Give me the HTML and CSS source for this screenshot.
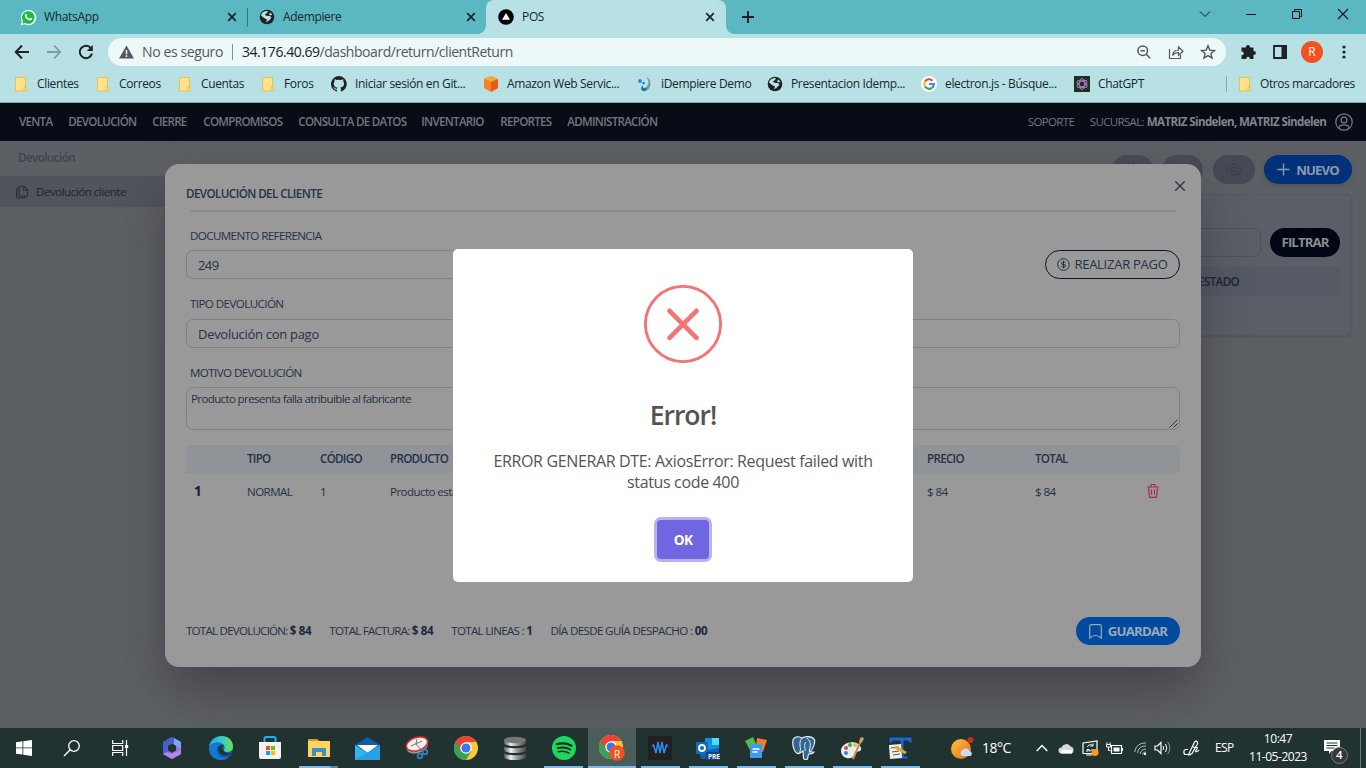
FILE: index.html
```html
<!DOCTYPE html>
<html lang="es">
<head>
<meta charset="utf-8">
<title>POS</title>
<link rel="stylesheet" href="styles.css">
</head>
<body>
<svg class="defs" width="0" height="0">
  <defs>
    <linearGradient id="g365" x1="0" y1="0" x2="1" y2="1"><stop offset="0" stop-color="#2f66c8"/><stop offset=".5" stop-color="#7e6bdc"/><stop offset="1" stop-color="#c77be8"/></linearGradient>
    <linearGradient id="gEdge" x1="0" y1="0" x2="1" y2="0"><stop offset="0" stop-color="#27a9e8"/><stop offset=".6" stop-color="#3dcdb8"/><stop offset="1" stop-color="#6fe04c"/></linearGradient>
    <linearGradient id="gDb" x1="0" y1="0" x2="1" y2="0"><stop offset="0" stop-color="#555"/><stop offset=".3" stop-color="#eee"/><stop offset=".6" stop-color="#999"/><stop offset="1" stop-color="#444"/></linearGradient>
    <linearGradient id="gSun" x1="0" y1="0" x2="1" y2="1"><stop offset="0" stop-color="#f9c43c"/><stop offset="1" stop-color="#f0661f"/></linearGradient>
    <symbol id="close" viewBox="0 0 10 10"><path d="M1.2 1.2l7.6 7.6M8.8 1.2L1.2 8.8" stroke="#202124" stroke-width="1.7"/></symbol>
    <symbol id="globe" viewBox="0 0 16 16"><circle cx="8" cy="8" r="7.3" fill="#202124"/><path d="M2 6.500Q2.500 3.500 6 2.200L9 2 8 4 6 5.200l1 1.500 4 .3 1.500 1.500-2 2.500L7 13.500l1-3L5 9zM11 3.600l2.300 1.900-1.300 1-2-1z" fill="#b7e1e4"/></symbol>
    <symbol id="folder" viewBox="0 0 14 16"><path d="M2.500 1.500h10v9.500l.8 1v3h-10.800z" fill="#ffe28a" stroke="#e8c04c"/><path d="M11 14.500v-3.500h1.500" fill="none" stroke="#e8c04c"/></symbol>
    <symbol id="chrome" viewBox="0 0 24 24"><circle cx="12" cy="12" r="12" fill="#fcc934"/><path d="M1.600 6A12 12 0 0 0 12 24L17.200 15 12 12z" fill="#34a353"/><path d="M1.600 6A12 12 0 0 1 22.400 6H12L7 15z" fill="#e94335"/><circle cx="12" cy="12" r="5.800" fill="#fff"/><circle cx="12" cy="12" r="4.500" fill="#3b78e7"/></symbol>
  </defs>
</svg>
<div class="screen">
  <header class="tabs">
    <div class="tab tab-a"><svg width="17" height="17" viewBox="0 0 17 17"><path d="M.8 16.300l1-4A7.700 7.700 0 1 1 4.800 15.300z" fill="#fff"/><path d="M2.400 14.700l.7-2.600A6.300 6.300 0 1 1 5.200 14z" fill="#12c143"/><path d="M5 5.500c.6-1.300 1.600-1 2 .2.300.9-.6 1-.2 1.700.6 1.100 1.500 1.700 2.500 2.100.7.200.8-1 1.500-.7 2.200.9 1.600 1.500.9 2.100C9.500 12.800 3.600 8.800 5 5.500z" fill="#fff"/></svg><span>WhatsApp</span><svg width="10" height="10"><use href="#close"/></svg></div>
    <div class="tab tab-b"><svg width="16" height="16"><use href="#globe"/></svg><span>Adempiere</span><svg width="10" height="10"><use href="#close"/></svg></div>
    <div class="tab tab-c"><svg width="16" height="16" viewBox="0 0 16 16"><circle cx="8" cy="8" r="7.800" fill="#000"/><path d="M8 4l4 6.800H4z" fill="#fff"/></svg><span>POS</span><svg width="10" height="10"><use href="#close"/></svg></div>
    <svg class="plus" width="12" height="12" viewBox="0 0 12 12"><path d="M6 0v12M0 6h12" stroke="#202124" stroke-width="1.900"/></svg>
    <div class="win">
      <svg width="12" height="12" viewBox="0 0 12 12"><path d="M1 3.500l5 5 5-5" fill="none" stroke="#111"/></svg>
      <svg width="12" height="12" viewBox="0 0 12 12"><path d="M1 6.500h10" stroke="#111"/></svg>
      <svg width="12" height="12" viewBox="0 0 12 12"><path d="M1.500 3.500h7v7h-7zM3.500 3v-1.500h7v7H9" fill="none" stroke="#111"/></svg>
      <svg width="12" height="12" viewBox="0 0 12 12"><path d="M1 1l10 10M11 1L1 11" stroke="#111" stroke-width="1.100"/></svg>
    </div>
  </header>
  <div class="toolbar">
    <svg width="16" height="16" viewBox="0 0 16 16"><path d="M15 8H2M8 1.500L1.800 8 8 14.500" fill="none" stroke="#202124" stroke-width="2"/></svg>
    <svg width="16" height="16" viewBox="0 0 16 16"><path d="M1 8h13M8 1.500L14.200 8 8 14.500" fill="none" stroke="#7e9a9d" stroke-width="1.800"/></svg>
    <svg width="16" height="16" viewBox="0 0 16 16"><path d="M13 4.300A6.200 6.200 0 1 0 14 9.600" fill="none" stroke="#202124" stroke-width="2"/><path d="M14.800 1v6H8.800z" fill="#202124"/></svg>
    <div class="omnibox">
      <svg width="15" height="14" viewBox="0 0 15 14"><path d="M7.500.5L15 13.500H0z" fill="#54585b"/><path d="M7.500 5v4.200M7.500 10.300v1.700" stroke="#edf8f8" stroke-width="1.500"/></svg>
      <span class="insecure">No es seguro</span><i></i><span class="url"><b>34.176.40.69</b>/dashboard/return/clientReturn</span>
      <div class="oicons">
        <svg width="16" height="16" viewBox="0 0 16 16"><circle cx="6.700" cy="6.700" r="4.800" fill="none" stroke="#54585b" stroke-width="1.500"/><path d="M4.500 6.700h4.400M10 10l4.200 4.200" stroke="#54585b" stroke-width="1.500"/></svg>
        <svg width="16" height="16" viewBox="0 0 16 16"><path d="M1.500 5v9.500h11V11M4.500 11.500c.5-4 3-5.500 6-5.500V3l4.500 4.300-4.500 4V8.500c-2.500 0-4.500.7-6 3z" fill="none" stroke="#54585b" stroke-width="1.200"/></svg>
        <svg width="16" height="16" viewBox="0 0 16 16"><path d="M8 1.800l1.800 4.300 4.700.4-3.600 3 1.100 4.600-4-2.500-4 2.500 1.100-4.600-3.600-3 4.700-.4z" fill="none" stroke="#54585b" stroke-width="1.400"/></svg>
      </div>
    </div>
    <div class="ext">
      <svg width="16" height="16" viewBox="0 0 16 16"><path d="M6 3a2 2 0 0 1 4 0v.5h3.500V7h.5a1.900 1.900 0 0 1 0 3.800h-.5V15H9.800v-.6a1.700 1.700 0 0 0-3.400 0v.6H1.500v-3.800H2a1.800 1.800 0 0 0 0-3.600h-.5V3.500H6z" fill="#202124"/></svg>
      <svg width="16" height="16" viewBox="0 0 16 16"><path d="M2 2h12v12H2z" fill="none" stroke="#202124" stroke-width="1.800"/><path d="M9.500 1.500H15v13H9.500z" fill="#202124"/></svg>
      <span class="avatar">R</span>
      <svg width="4" height="14" viewBox="0 0 4 14"><g fill="#202124"><circle cx="2" cy="2" r="1.600"/><circle cx="2" cy="7" r="1.600"/><circle cx="2" cy="12" r="1.600"/></g></svg>
    </div>
  </div>
  <nav class="bookmarks">
    <span><svg width="14" height="16"><use href="#folder"/></svg>Clientes</span>
    <span><svg width="14" height="16"><use href="#folder"/></svg>Correos</span>
    <span><svg width="14" height="16"><use href="#folder"/></svg>Cuentas</span>
    <span><svg width="14" height="16"><use href="#folder"/></svg>Foros</span>
    <span><svg width="16" height="16" viewBox="0 0 16 16"><path d="M8 0a8 8 0 0 0-2.500 15.600c.4 0 .5-.2.500-.4v-1.500c-2.200.5-2.700-1-2.700-1-.4-.9-.9-1.200-.9-1.200-.7-.5.1-.5.1-.5.800.100 1.200.8 1.200.8.700 1.300 1.900.9 2.300.7.100-.5.300-.9.500-1.100-1.800-.2-3.700-.9-3.700-4 0-.8.3-1.500.8-2.100 0-.2-.3-1 .1-2.100 0 0 .7-.2 2.200.8a7.600 7.600 0 0 1 4 0c1.500-1 2.200-.8 2.200-.8.400 1.100.2 1.900.1 2.100.5.600.8 1.300.8 2.100 0 3.100-1.900 3.700-3.700 4 .3.300.6.800.6 1.500v2.200c0 .2.100.5.600.4A8 8 0 0 0 8 0z" fill="#202124"/></svg>Iniciar sesión en Git...</span>
    <span><svg width="16" height="16" viewBox="0 0 16 16"><path d="M8 0l7 3v9l-7 4-7-4V3z" fill="#f58220"/><path d="M8 6l7-3v9l-7 4z" fill="#ea5a1c"/><path d="M8 0l7 3-7 3-7-3z" fill="#fba53c"/></svg>Amazon Web Servic...</span>
    <span><svg width="16" height="16" viewBox="0 0 16 16"><path d="M9 1c6 2 6 11 0 14-4 1.500-6-3-3.500-5.500 0 2.500 2 3.500 4 1.500C12 8 12 4 9 1z" fill="#7d98a5"/><path d="M5.500 9.500c0 3 2.500 3.500 4.500 1.500 0 2.500-2 4.500-4 4S3.500 11.500 5.500 9.500z" fill="#1276b5"/><circle cx="3" cy="5" r="1.900" fill="#1b8ed0"/><circle cx="6.500" cy="7" r="1.200" fill="#1276b5"/></svg>iDempiere Demo</span>
    <span><svg width="16" height="16"><use href="#globe"/></svg>Presentacion Idemp...</span>
    <span><svg width="16" height="16" viewBox="0 0 16 16"><circle cx="8" cy="8" r="8" fill="#fff"/><g fill="none" stroke-width="2.200"><path d="M4 5.500A4.800 4.800 0 0 1 11.500 4.700" stroke="#ea4335"/><path d="M4 10.500a4.900 4.900 0 0 1 0-5" stroke="#fbbc05"/><path d="M11 11.800A4.800 4.800 0 0 1 4 10.500" stroke="#34a853"/><path d="M8 8h4.800a4.800 4.800 0 0 1-1.800 3.800" stroke="#4285f4"/></g></svg>electron.js - Búsque...</span>
    <span><svg width="16" height="16" viewBox="0 0 16 16"><path d="M0 0h16v16H0z" fill="#1c3220"/><g fill="none" stroke="#c07fd2" stroke-width=".9"><ellipse cx="8" cy="8" rx="2.800" ry="5.500"/><ellipse cx="8" cy="8" rx="2.800" ry="5.500" transform="rotate(60 8 8)"/><ellipse cx="8" cy="8" rx="2.800" ry="5.500" transform="rotate(120 8 8)"/></g></svg>ChatGPT</span>
    <span class="others"><svg width="14" height="16"><use href="#folder"/></svg>Otros marcadores</span>
  </nav>

  <main class="app">
    <nav class="menu">
      <span>VENTA</span><span>DEVOLUCIÓN</span><span>CIERRE</span><span>COMPROMISOS</span><span>CONSULTA DE DATOS</span><span>INVENTARIO</span><span>REPORTES</span><span>ADMINISTRACIÓN</span>
      <span class="support">SOPORTE</span><span class="branch">SUCURSAL:</span><strong>MATRIZ Sindelen, MATRIZ Sindelen</strong>
      <svg width="18" height="18" viewBox="0 0 18 18"><g fill="none" stroke="#777b89" stroke-width="1.200"><circle cx="9" cy="9" r="8.200"/><circle cx="9" cy="7" r="2.900"/><path d="M4 15c0-4.300 10-4.300 10 0"/></g></svg>
    </nav>
    <div class="body">
      <aside class="side">
        <h4>Devolución</h4>
        <div class="item"><svg width="14" height="14" viewBox="0 0 14 14"><path d="M4 1.200h4.800l3.700 3.600v5.400a1 1 0 0 1-1 1H5a1 1 0 0 1-1-1zM8.500 1.200V5h4M4 3.500H2.600a1 1 0 0 0-1 1v7.300a1.200 1.200 0 0 0 1.200 1.200h6.500a1 1 0 0 0 1-1v-.8" fill="none" stroke="#272d3a" stroke-width="1.100"/></svg>Devolución cliente</div>
      </aside>
      <section class="content">
        <div class="actions">
          <span class="pill"><svg width="16" height="18" viewBox="0 0 16 18"><path d="M8 1v14M4 11l4 4 4-4" fill="none" stroke="#2c3243" stroke-width="1.200"/></svg></span>
          <span class="pill"><svg width="16" height="16" viewBox="0 0 16 16"><path d="M13 5a6 6 0 1 0 1 5M13.700 1.500V5H10" fill="none" stroke="#2c3243" stroke-width="1.200"/></svg></span>
          <span class="pill wide"><svg width="16" height="13" viewBox="0 0 16 13"><path d="M.8 6.500C3.500-.8 12.500-.8 15.200 6.500c-2.700 7.300-11.700 7.300-14.400 0z" fill="none" stroke="#393d4b"/><circle cx="8" cy="6.500" r="2.500" fill="none" stroke="#393d4b"/></svg></span>
          <span class="nuevo"><svg width="13" height="13" viewBox="0 0 13 13"><path d="M6.500.5v12M.5 6.500h12" stroke="#8c99aa" stroke-width="1.400"/></svg>NUEVO</span>
        </div>
        <div class="panel">
          <div class="filter"><span class="field"></span><span class="filtrar">FILTRAR</span></div>
          <div class="thead">ESTADO</div>
        </div>
      </section>
    </div>
  </main>

  <footer class="taskbar">
    <div class="slots sys">
      <span><svg width="16" height="16" viewBox="0 0 16 16"><path d="M0 2.200l6.500-.9v6.200H0zM7.300 1.200L16 0v7.500H7.300zM0 8.300h6.500v6.300L0 13.700zM7.300 8.300H16V16l-8.700-1.200z" fill="#fff"/></svg></span>
      <span><svg width="18" height="18" viewBox="0 0 18 18"><circle cx="11" cy="7" r="5.300" fill="none" stroke="#fff" stroke-width="1.300"/><path d="M7.200 10.800L1 17" stroke="#fff" stroke-width="1.400"/></svg></span>
      <span><svg width="17" height="16" viewBox="0 0 17 16"><path d="M.7 0v3.500h10V0M.7 16v-3.500h10V16M.7 5.500h10v5H.7zM14.500 0v16" fill="none" stroke="#fff" stroke-width="1.200"/><path d="M13 5h3.200v3H13z" fill="#fff"/></svg></span>
    </div>
    <div class="slots apps">
      <span><svg width="22" height="24" viewBox="0 0 22 24"><path d="M11 1l9 5v12l-9 5-9-5V6z" fill="url(#g365)"/><path d="M11 1L2 6v12l4 2 1-10 6-3.500V2z" fill="#4a5fcb"/><path d="M20 6v7l-7-4V2z" fill="#79a9e8"/><path d="M2 18l9 5 9-5v-4l-9 4-5-2z" fill="#b483e6"/><path d="M11 7.500l4 2.300v4.600l-4 2.300-4-2.300V9.800z" fill="#203331"/></svg></span>
      <span><svg width="24" height="24" viewBox="0 0 24 24"><circle cx="12" cy="12" r="12" fill="#0f59a4"/><path d="M0 11C2-3 24-4 24 11c0 5-7 6.500-9.500 3.500C17 12 15 7 10 7 5 7 1 9 0 11z" fill="url(#gEdge)"/><path d="M0 12C2 6 11 4 14 9c-6-1-8 6-4 10 3 3.500 8 3 11 1C15 27 0 25 0 12z" fill="#1179d4"/><path d="M14.500 14.500c-3-2-1-5 0-6-5-1-7 6-2.500 9.500 3 2 7 1.500 9.700-.2 1-.7.500-1.300 0-1-2 1-5 1-7.200-2.300z" fill="#203331"/></svg></span>
      <span><svg width="24" height="24" viewBox="0 0 24 24"><path d="M6.500 7V2.500Q6.500 1 8 1h8q1.500 0 1.500 1.500V7" fill="none" stroke="#22aef0" stroke-width="2"/><path d="M1 6h22v15q0 2-2 2H3q-2 0-2-2z" fill="#f2f2f2"/><path d="M8 10h4v4H8z" fill="#f1511b"/><path d="M13 10h4v4h-4z" fill="#80bb03"/><path d="M8 15h4v4H8z" fill="#05a6f0"/><path d="M13 15h4v4h-4z" fill="#fbb908"/></svg></span>
      <span class="run more"><svg width="22" height="20" viewBox="0 0 22 20"><path d="M0 1h9l2 2h11v16H0z" fill="#ffd560"/><path d="M0 1h9l2 2H0z" fill="#d9981c"/><path d="M4 10h14v8h-4v-4H8v4H4z" fill="#3a8fd0"/></svg></span>
      <span><svg width="25" height="23" viewBox="0 0 25 23"><path d="M0 8l12.500-8L25 8v3H0z" fill="#0b5ea8"/><path d="M2 8h21l-10.500 8z" fill="#fff"/><path d="M0 8l12.500 8L25 8v15H0z" fill="#31b4f0"/><path d="M0 23L25 8v15z" fill="#27a0e4"/></svg></span>
      <span><svg width="24" height="24" viewBox="0 0 24 24"><ellipse cx="12" cy="10.500" rx="11" ry="6.500" transform="rotate(-18 12 10)" fill="#999"/><ellipse cx="12" cy="8" rx="11" ry="6.500" transform="rotate(-18 12 8)" fill="#f4eeee" stroke="#d32f2f" stroke-width="1.500"/><path d="M6 10l11-5M12 3l-1 5 7 8" stroke="#777" fill="none"/><circle cx="15" cy="20" r="2.300" fill="none" stroke="#2e85bd" stroke-width="1.800"/><circle cx="20" cy="16" r="2.300" fill="none" stroke="#2e85bd" stroke-width="1.800"/></svg></span>
      <span><svg width="24" height="24"><use href="#chrome"/></svg></span>
      <span><svg width="22" height="24" viewBox="0 0 22 24"><g fill="url(#gDb)"><path d="M0 4v3c0 4 22 4 22 0V4zM0 10v4c0 4 22 4 22 0v-4c0 3-22 3-22 0zM0 17v4c0 4 22 4 22 0v-4c0 3-22 3-22 0z"/></g><ellipse cx="11" cy="4" rx="11" ry="3.300" fill="#777"/></svg></span>
      <span class="run"><svg width="24" height="24" viewBox="0 0 24 24"><circle cx="12" cy="12" r="12" fill="#1ed760"/><g fill="none" stroke="#102c1c" stroke-linecap="round"><path d="M5 8.200q8-2.200 14.500 1.500" stroke-width="2.300"/><path d="M5.700 12.200q7-1.800 12.500 1.300" stroke-width="1.900"/><path d="M6.300 15.800q6-1.400 10.500 1.200" stroke-width="1.600"/></g></svg></span>
      <span class="run active"><svg width="26" height="26" viewBox="0 0 26 26"><svg width="24" height="24"><use href="#chrome"/></svg><circle cx="18" cy="18" r="7.800" fill="#f4511e"/></svg><em>R</em></span>
      <span class="run"><svg width="24" height="24" viewBox="0 0 24 24"><path d="M0 0h24v24H0z" fill="#222020"/><path d="M4 10l1.500-1L8 17l2-11 2 11 2-11 2 11 2.500-8 1.500 1" fill="none" stroke="#2d8ef0" stroke-width="1.500"/></svg></span>
      <span class="run"><svg width="24" height="24" viewBox="0 0 24 24"><path d="M9 2h14v14H9z" fill="#1490df"/><path d="M16 2h7v7h-7z" fill="#50d9ff"/><path d="M3 16l20-4v11H5z" fill="#125fb2"/><path d="M0 6h12v12H0z" fill="#0f6cbd"/><circle cx="6" cy="12" r="3" fill="none" stroke="#fff" stroke-width="1.800"/><path d="M10 16h14v8H10z" fill="#11457e"/></svg><em class="pre">PRE</em></span>
      <span class="run"><svg width="22" height="22" viewBox="0 0 22 22"><path d="M0 4l8-4 4 9-6 6z" fill="#57b946"/><path d="M12 1l10 2-4 12-7-4z" fill="#f57c22"/><path d="M5 7h12v14H5z" fill="#3b9bf5"/><path d="M7.500 12h7M7.500 15h5" stroke="#fff" stroke-width="1.500"/></svg></span>
      <span class="run"><svg width="24" height="24" viewBox="0 0 24 24"><path d="M8 17C3 20 0 10 1 4c2-5 7-3 9-2 6-3 14-1 12.500 5-1 5-3 8-5.500 9l5 0c-1 2-4 2-5.500 2l-1 5q-3 2-4-1l-.5-7z" fill="#336791" stroke="#e7edf2" stroke-width="1.200"/><path d="M10 2C7 5 8 10 8.500 13c-.5 2 0 3-2 4M15 2c4 4 4 7 2 13M14 6c-3 3 0 6-1 9" fill="none" stroke="#e7edf2"/></svg></span>
      <span class="run"><svg width="24" height="24" viewBox="0 0 24 24"><path d="M1 15C1 5 19 3 21 12c1 5-5 2-6 6-2 7-14 5-14-3z" fill="#e8edf2"/><circle cx="6" cy="12" r="2" fill="#e04a3a"/><circle cx="10" cy="9" r="2" fill="#4aa84a"/><circle cx="15" cy="9" r="2" fill="#efba30"/><circle cx="6" cy="17" r="2" fill="#3b82d0"/><path d="M22 2L13 23" stroke="#c98b4a" stroke-width="2"/><path d="M19 5l2-4 3 1-2 5z" fill="#c9a06a"/></svg></span>
      <span class="run"><svg width="24" height="24" viewBox="0 0 24 24"><path d="M1 1h23v6h-3l-1-2h-4v15h4v3H9v-3h3V5H5L4 7H1z" fill="#2467bd" stroke="#0d3157"/><path d="M1 9l12-1 1 14-12 1z" fill="#f1f1ec"/><path d="M3 12l8-1M4 16l7-1M5 19l7-1" stroke="#555"/><path d="M7 11l11 6" stroke="#e5a825" stroke-width="3"/></svg></span>
    </div>
    <div class="tray">
      <svg class="sun" width="23" height="23" viewBox="0 0 23 23"><circle cx="10" cy="12" r="10" fill="url(#gSun)"/><path d="M11 19a3.500 3.500 0 0 1 .5-6 4 4 0 0 1 7 1 2.700 2.700 0 0 1 1 5z" fill="#c5dcf8"/><circle cx="19.500" cy="3" r="3" fill="#cf2b1f"/></svg>
      <span class="deg">18°C</span>
      <svg class="t1" width="12" height="8" viewBox="0 0 12 8"><path d="M.7 7L6 1.500 11.300 7" fill="none" stroke="#fff" stroke-width="1.400"/></svg>
      <svg class="t2" width="17" height="11" viewBox="0 0 17 11"><path d="M3.500 10.500a3 3 0 0 1 0-6 5 5 0 0 1 9-1 3.600 3.600 0 0 1 .5 7z" fill="#d8d8d8"/><path d="M3 10.500c0-4 4-5 6-3 3-2 7 0 5 3z" fill="#fff"/></svg>
      <svg class="t3" width="17" height="16" viewBox="0 0 17 16"><path d="M1 3l14-2v12.500H1zM4 15h6" fill="none" stroke="#fff" stroke-width="1.200"/><path d="M5.500 7a3 3 0 0 1 5-1.500M11 3.500V6H8.500M10.500 9a3 3 0 0 1-5 1M5 12V9.500h2.500" fill="none" stroke="#fff"/><circle cx="13" cy="12.500" r="3.500" fill="#ff9a16"/></svg>
      <svg class="t4" width="17" height="13" viewBox="0 0 17 13"><path d="M5.500 3.500h10v8h-10z" fill="none" stroke="#fff" stroke-width="1.200"/><path d="M7.500 5.500h6v4h-6zM16 6h1v3h-1z" fill="#fff"/><path d="M1 .5v2M4 .5v2M.5 2.500h4v2.500h-4zM2.500 5v3.500h2" fill="none" stroke="#fff"/></svg>
      <svg class="t5" width="13" height="13" viewBox="0 0 13 13"><g fill="none" stroke="#b5bcbb"><path d="M.7 10A10 10 0 0 1 12 1M3.500 11A7.500 7.500 0 0 1 12 4M6.300 12A5 5 0 0 1 12 7.200M8.700 12.500A3 3 0 0 1 12 10"/></g><circle cx="11" cy="12" r="1.200" fill="#fff"/></svg>
      <svg class="t6" width="17" height="14" viewBox="0 0 17 14"><path d="M1 5h2.500L7 1.500v11L3.500 9H1z" fill="none" stroke="#fff" stroke-width="1.200"/><path d="M9 5q1.500 2 0 4M11.500 3q2.500 4 0 8" fill="none" stroke="#fff"/><path d="M13.800 1q4 6 0 12" fill="none" stroke="#8a9694"/></svg>
      <svg class="t7" width="17" height="16" viewBox="0 0 17 16"><path d="M5 9.500H2.500C.2 10 .2 14.500 3 14.500h2.500M6 13.500L11.500 2.200q1.500-2 3 0 .5 1-.2 2L9 13.500l-3 1.500zM9.500 6.500l3 1.500M12.500 7.500q3-1 1 2-2 3 .5 2 1.500-.5 2-1.500" fill="none" stroke="#fff" stroke-width="1.200"/></svg>
      <span class="esp">ESP</span>
      <div class="clock"><span>10:47</span><span>11-05-2023</span></div>
      <div class="notif"><svg width="24" height="25" viewBox="0 0 24 25"><path d="M0 1h16v11H7.500L5 15v-3H0z" fill="#fff"/><path d="M2.500 4h11M2.500 6.500h11M2.500 9h8" stroke="#203331" stroke-width="1.100"/><circle cx="15.500" cy="16.500" r="8" fill="#333938" stroke="#777f7e"/></svg><em>4</em></div>
    </div>
  </footer>

  <div class="overlay">
    <section class="modal">
      <div class="mhead"><h3>DEVOLUCIÓN DEL CLIENTE</h3><svg width="10" height="10" viewBox="0 0 10 10"><path d="M.3.3l9.400 9.400M9.700.3L.3 9.700" stroke="#263243" stroke-width="1.300"/></svg></div>
      <hr>
      <label class="l1">DOCUMENTO REFERENCIA</label>
      <div class="row"><div class="input short">249</div><span class="pago"><svg width="13" height="13" viewBox="0 0 13 13"><g fill="none" stroke="#253247"><circle cx="6.500" cy="6.500" r="5.800"/><path d="M8.500 4.800Q8 3.800 6.500 3.800T4.600 5.200 6.500 6.500 8.500 7.900 6.500 9.200 4.400 8M6.500 2.800v7.400"/></g></svg>REALIZAR PAGO</span></div>
      <label class="l2">TIPO DEVOLUCIÓN</label>
      <div class="input sel">Devolución con pago</div>
      <label class="l3">MOTIVO DEVOLUCIÓN</label>
      <div class="area">Producto presenta falla atribuible al fabricante<svg width="9" height="9" viewBox="0 0 9 9"><path d="M.5 8.500l8-8M4.500 8.500l4-4" stroke="#333"/></svg></div>
      <div class="tr th"><span></span><span>TIPO</span><span>CÓDIGO</span><span>PRODUCTO</span><span>PRECIO</span><span>TOTAL</span><span></span></div>
      <div class="tr td"><b>1</b><span>NORMAL</span><span>1</span><span>Producto esta</span><span>$ 84</span><span>$ 84</span><span><svg width="12" height="14" viewBox="0 0 12 14"><path d="M.5 3h11M1.500 3l.7 9.200q.1 1.100 1.200 1.100h5.200q1.100 0 1.200-1.100L10.500 3M4 3V1q0-.5.500-.5h3q.5 0 .5.500v2M4.500 5.500v5M7.500 5.500v5" fill="none" stroke="#a32e45" stroke-width="1.200"/></svg></span></div>
      <div class="mfoot">
        <span>TOTAL DEVOLUCIÓN: <b>$ 84</b></span><span>TOTAL FACTURA: <b>$ 84</b></span><span class="lines">TOTAL LINEAS : <b>1</b></span><span class="days">DÍA DESDE GUÍA DESPACHO : <b>00</b></span>
        <span class="guardar"><svg width="13" height="15" viewBox="0 0 13 15"><path d="M.7 14V2.200Q.7.700 2.200.700h8.600q1.500 0 1.500 1.500V14q-2.500-2.500-5.800-2.500T.7 14z" fill="none" stroke="#9aa9bb" stroke-width="1.200"/></svg>GUARDAR</span>
      </div>
    </section>
  </div>
  <div class="overlay top">
    <section class="alert">
      <svg width="78" height="78" viewBox="0 0 78 78"><circle cx="39" cy="39" r="37.600" fill="none" stroke="#f27474" stroke-width="2.900"/><path d="M25.500 25.800l27 27M52.500 25.800l-27 27" stroke="#f27474" stroke-width="4.700" stroke-linecap="round"/></svg>
      <h2>Error!</h2>
      <p>ERROR GENERAR DTE: AxiosError: Request failed with<br>status code 400</p>
      <button>OK</button>
    </section>
  </div>
</div>
</body>
</html>
```
FILE: styles.css
```css
* { box-sizing: border-box; }
body { margin: 0; font-family: "Open Sans", "Noto Sans", sans-serif; }
svg { display: block; flex: none; }
.defs { position: absolute; }
h2, h3, h4, p, hr { margin: 0; }
em { font-style: normal; }
span, label, h3, h4, strong { white-space: nowrap; }
.screen { position: relative; width: 1366px; height: 768px; overflow: hidden; display: flex; flex-direction: column; }

/* browser tabs */
.tabs { height: 34px; background: #5bb7c1; display: flex; align-items: center; font-size: 12px; letter-spacing: -.34px; color: #16282b; }
.tab { display: flex; align-items: center; height: 34px; }
.tab span { flex: 1; padding-bottom: 2px; }
.tab-a { width: 248px; padding: 0 11px 0 20px; gap: 7px; background: linear-gradient(#33767e, #33767e) right center / 1px 19px no-repeat; }
.tab-b { width: 238px; padding: 0 10px 0 11px; gap: 8px; }
.tab-c { position: relative; width: 240px; padding: 0 11px 0 12px; gap: 8px; background: #b7e1e4; border-radius: 8px 8px 0 0; }
.tab-c::before, .tab-c::after { content: ""; position: absolute; bottom: 0; width: 8px; height: 8px; }
.tab-c::before { left: -8px; background: radial-gradient(circle at 0 0, transparent 7.5px, #b7e1e4 8px); }
.tab-c::after { right: -8px; background: radial-gradient(circle at 100% 0, transparent 7.500px, #b7e1e4 8px); }
.plus { margin-left: 16px; }
.win { margin-left: auto; display: flex; gap: 34px; padding: 0 17px 6px 0; }

/* address bar */
.toolbar { height: 36px; background: #b7e1e4; display: flex; align-items: center; padding: 0 20px 0 14px; gap: 16px; }
.omnibox { width: 1118px; height: 28px; border-radius: 14px; margin-left: -2px; background: #edf8f8; display: flex; align-items: center; padding: 0 10px 0 11px; font-size: 14px; color: #54585b; }
.omnibox i { width: 1px; height: 16px; background: #8b9495; margin: 0 9px 0 8px; }
.omnibox > span { padding-bottom: 1px; }
.insecure { width: 82px; margin-left: 8px; letter-spacing: -.39px; }
.url { letter-spacing: -.46px; }
.url b { font-weight: 400; color: #202124; }
.oicons { display: flex; gap: 16px; margin-left: auto; }
.ext { display: flex; align-items: center; flex: 1; margin-left: -2px; gap: 14px; }
.ext svg:nth-of-type(2) { margin-left: 2px; }
.ext svg:last-child { margin-left: 5px; }
.avatar { width: 22px; height: 22px; border-radius: 50%; background: #f4511e; color: #fff; font-size: 12px; line-height: 22px; text-align: center; margin-left: -1px; }

.bookmarks { height: 33px; background: #b7e1e4; border-bottom: 1px solid #87a9ac; padding: 0 0 5px 13px; display: grid; grid-template-columns: 82px 82px 83px 71px 152px 154px 130px 154px 153px 152px 140px; align-items: center; font-size: 12px; letter-spacing: -.35px; color: #16282b; }
.bookmarks span { display: flex; align-items: center; gap: 8px; }
.bookmarks svg[width="14"] { margin-right: 2px; }
.bookmarks .others { border-left: 1px solid #86abad; height: 16px; padding-left: 10px; gap: 7px; letter-spacing: -.42px; }

/* application */
.app { height: 625px; background: #5c5f64; font-size: 11.6px; }
.menu { height: 38px; background: #080c16; color: #73767d; padding: 0 0 2px 19px; display: grid; grid-template-columns: 49.300px 84px 51px 95px 123px 79px 67px 460.500px 62px 57px 188.500px 20px; align-items: center; font-weight: 600; letter-spacing: -.72px; }
.menu svg { margin-top: 2px; }
.menu .support { font-weight: 500; }
.menu .branch { font-weight: 400; }
.menu strong { font-weight: 700; letter-spacing: -.63px; color: #82858b; }
.body { display: flex; height: 587px; }
.side { width: 165px; flex: none; }
.side h4 { height: 35px; line-height: 34px; padding-left: 18px; font-size: 11.6px; font-weight: 600; letter-spacing: -.55px; color: #41444f; }
.item { height: 31px; background: #50545c; display: flex; align-items: center; gap: 7px; padding-left: 15px; letter-spacing: -.5px; color: #20262f; font-weight: 500; }
.content { flex: 1; padding: 14px 14px 0 0; }
.actions { display: flex; justify-content: flex-end; gap: 9px; height: 29px; margin-bottom: 10px; }
.pill, .nuevo { height: 29px; border-radius: 15px; background: #484b55; display: flex; align-items: center; justify-content: center; }
.pill { width: 41px; }
.pill.wide { width: 42px; background: #464a54; margin-left: 1px; }
.nuevo { width: 88px; background: #013279; color: #8c99aa; font-size: 13.200px; font-weight: 700; letter-spacing: -.95px; gap: 6px; box-shadow: 0 2px 4px #50535a; }
.panel { height: 142px; border-radius: 6px; border: 1px solid #545861; background: #5a5e67; padding: 33px 11px 0; box-shadow: 0 1px 2px #51555c; }
.filter { display: flex; justify-content: flex-end; gap: 9px; height: 39px; }
.field { width: 700px; height: 29px; border: 1px solid #4d515a; border-radius: 7px; }
.filtrar { width: 70px; height: 29px; border-radius: 15px; background: #000714; color: #8a8d92; font-size: 13.200px; font-weight: 700; letter-spacing: -.9px; line-height: 28px; text-align: center; }
.thead { height: 29px; line-height: 30px; padding-left: 1021px; background: #545963; font-weight: 600; letter-spacing: -.6px; color: #1d2430; }

/* return form dialog */
.overlay { position: absolute; left: 0; top: 103px; width: 1366px; height: 625px; overflow: hidden; padding: 61px 0 0 165px; }
.modal { width: 1036px; height: 503px; border-radius: 14px; background: #999; box-shadow: 0 25px 50px -5px rgba(40,38,46,.5); padding: 0 21px; color: #253247; font-size: 11.600px; letter-spacing: -.58px; display: flex; flex-direction: column; }
.mhead { height: 46px; display: flex; justify-content: space-between; padding: 16px 0 0; }
.mhead h3 { font-size: 11.600px; font-weight: 600; letter-spacing: -.56px; line-height: 27px; }
.mhead svg { margin: 1px -5px 0 0; }
.modal hr { border: 0; height: 2px; background: #8c8c8c; margin: 0 4px; flex: none; }
.modal label { padding-left: 4px; display: block; line-height: 16px; font-weight: 500; }
.l1 { margin: 16px 0 6px; letter-spacing: -.6px; }
.l2 { margin: 17px 0 7px; }
.l3 { margin: 17px 0 6px; }
.row { display: flex; justify-content: space-between; }
.input { height: 29px; border: 1px solid #818181; border-radius: 7px; padding: 0 11px; line-height: 27px; font-size: 13px; letter-spacing: -.46px; font-weight: 500; }
.short { width: 600px; padding-top: 1px; font-weight: 400; letter-spacing: -.6px; }
.sel { padding-top: 1px; letter-spacing: -.29px; }
.pago { width: 135px; height: 29px; border: 1px solid #0c1526; border-radius: 15px; display: flex; align-items: center; justify-content: center; gap: 4px; padding-bottom: 1px; font-size: 13px; letter-spacing: -.26px; font-weight: 500; }
.area { position: relative; height: 43px; border: 1px solid #818181; border-radius: 7px; padding: 2px 4px; line-height: 18px; letter-spacing: -.66px; }
.area svg { position: absolute; right: 1px; bottom: 1px; }
.tr { display: grid; grid-template-columns: 61px 73px 70px 537px 108px 112px 33px; align-items: center; }
.th { height: 28px; margin-top: 15px; padding-bottom: 1px; background: #909499; border-radius: 6px 6px 0 0; font-weight: 600; letter-spacing: -.7px; }
.td { height: 38px; padding-bottom: 2px; }
.td b { font-size: 13.500px; padding-left: 8px; color: #101d35; }
.mfoot { margin-top: 106px; height: 28px; display: flex; align-items: center; gap: 18px; letter-spacing: -.78px; }
.mfoot > span:not(.guardar) { padding-bottom: 1px; }
.mfoot b { letter-spacing: -.35px; color: #1c293d; }
.lines { letter-spacing: -.7px; }
.days { letter-spacing: -.64px; }
.guardar { margin-left: auto; width: 104px; height: 28px; border-radius: 14px; background: #004aa0; color: #9aa9bb; display: flex; align-items: center; justify-content: center; gap: 6px; font-size: 13.200px; font-weight: 700; letter-spacing: -.8px; }

/* error alert */
.top { padding: 146px 0 0 453px; }
.alert { width: 460px; height: 333px; border-radius: 5px; background: #fff; display: flex; flex-direction: column; align-items: center; padding-top: 36px; color: #545454; }
.alert h2 { font-size: 26.500px; line-height: 36px; font-weight: 600; letter-spacing: -1px; margin-top: 34px; }
.alert p { font-size: 16px; line-height: 21px; letter-spacing: -.35px; text-align: center; margin-top: 18px; white-space: nowrap; }
.alert button { width: 52px; height: 39px; margin-top: 27px; padding: 0; border: 0; border-radius: 4px; background: #7066e0; box-shadow: 0 0 0 3px #b7b2ef; color: #fff; font: 700 13.600px "Open Sans", sans-serif; letter-spacing: -.6px; }

/* taskbar */
.taskbar { height: 40px; background: #203331; display: flex; color: #fff; }
.slots { display: flex; }
.slots span { position: relative; display: flex; align-items: center; justify-content: center; width: 48px; height: 40px; }
.apps { margin-left: 3px; }
.apps span:nth-child(-n+9) { width: 49px; }
.run::after { content: ""; position: absolute; left: 5px; bottom: 0; width: 39px; height: 2px; background: #76b9ed; }
.more::after { background: linear-gradient(90deg, #76b9ed 31px, #4f89b5 32px); }
.active { background: #4b5d5b; }
.active::after { left: 0; width: 48px; }
.active em { position: absolute; left: 26px; top: 19px; font-size: 10px; line-height: 14px; }
.pre { position: absolute; left: 24px; top: 25px; font: 700 6.500px/8px "Open Sans", sans-serif; }
.tray { flex: 1; display: flex; align-items: center; padding-left: 27px; }
.deg { font-size: 14px; letter-spacing: -.46px; width: 54px; margin-left: 8px; padding-bottom: 1px; }
.t1 { margin-right: 10px; } .t2 { margin-right: 7px; } .t3 { margin-right: 7px; } .t4 { margin-right: 11px; }
.t5 { margin-right: 7px; } .t6 { margin-right: 12px; } .t7 { margin-right: 15px; }
.esp { width: 34px; font-size: 12px; letter-spacing: -.66px; padding-bottom: 1px; }
.clock { width: 58px; display: flex; flex-direction: column; align-items: center; font-size: 12px; line-height: 18px; letter-spacing: -.46px; }
.notif { position: relative; width: 37px; height: 40px; padding: 11px 0 0; margin-left: 17px; border-right: 1px solid #6b7776; }
.notif em { position: absolute; left: 12px; top: 19px; font-size: 11.500px; line-height: 16px; font-weight: 600; }
```
